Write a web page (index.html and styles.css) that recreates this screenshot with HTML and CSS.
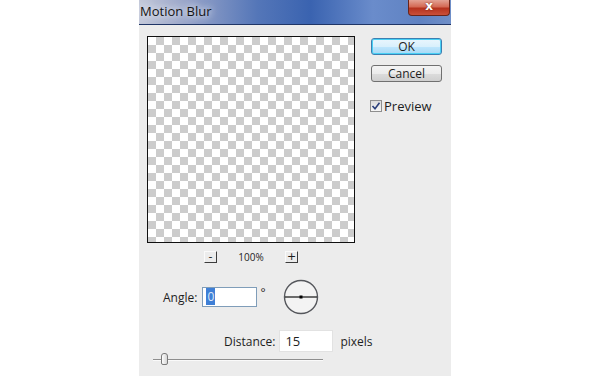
FILE: index.html
```html
<!DOCTYPE html>
<html lang="en">
<head>
    <meta charset="UTF-8">
    <title>Motion Blur</title>
    <link rel="stylesheet" href="styles.css">
</head>
<body>
    <div class="dialog">
        <div class="titlebar">
            <span class="title">Motion Blur</span>
            <span class="close">x</span>
        </div>

        <div class="panel">
            <div class="left">
                <div class="preview"></div>

                <div class="zoom-row">
                    <span class="zoom-btn">-</span>
                    <span class="zoom-value">100%</span>
                    <span class="zoom-btn">+</span>
                </div>

                <div class="angle-row">
                    <span class="label">Angle:</span>
                    <span class="field angle-field"><span class="selected">0</span></span>
                    <span class="degree">°</span>
                    <svg class="dial" width="36" height="36" viewBox="0 0 36 36">
                        <circle cx="18" cy="18" r="16.5" fill="#f3f3f3" stroke="#55575c" stroke-width="1.4"/>
                        <line x1="2" y1="18" x2="34" y2="18" stroke="#111" stroke-width="1.2"/>
                        <rect x="16.5" y="16.5" width="3" height="3" fill="#000"/>
                    </svg>
                </div>

                <div class="distance-row">
                    <span class="label">Distance:</span>
                    <span class="field distance-field">15</span>
                    <span class="unit">pixels</span>
                </div>

                <div class="slider">
                    <div class="track"></div>
                    <div class="thumb"></div>
                </div>
            </div>

            <div class="right">
                <div class="btn btn-default">OK</div>
                <div class="btn">Cancel</div>
                <label class="check">
                    <span class="box">
                        <svg width="10" height="10" viewBox="0 0 10 10">
                            <path d="M1.5 5 L4 7.8 L8.5 1.8" fill="none" stroke="#2b3f7a" stroke-width="1.6"/>
                        </svg>
                    </span>
                    Preview
                </label>
            </div>
        </div>
    </div>
</body>
</html>
```

FILE: styles.css
```css
body {
    margin: 0;
    padding: 0;
    background: #fff;
    font-family: "Open Sans", "Noto Sans", sans-serif;
    color: #1e1e1e;
}

.dialog {
    margin-left: 139px;
    width: 312px;
    height: 376px;
    background: #ececec;
    overflow: hidden;
}

.titlebar {
    height: 24px;
    display: flex;
    justify-content: space-between;
    align-items: flex-start;
    border-bottom: 1px solid #1f3566;
    background: linear-gradient(90deg, #c3c8d9 0%, #99a5c9 15%, #5476b8 38%, #3a63b0 55%, #6a8ccb 75%, #5f82c2 90%, #6f8fc8 100%);
}

.title {
    font-size: 13px;
    line-height: 22px;
    padding-left: 1px;
    color: #141414;
    text-shadow: 0 0 6px #e6e9f2, 0 0 10px #e6e9f2;
}

.close {
    width: 42px;
    height: 16px;
    margin-right: 1px;
    box-sizing: border-box;
    border: 1px solid #6a2419;
    border-top: none;
    border-radius: 0 0 4px 4px;
    background: linear-gradient(#e3a294 0%, #d46a55 45%, #b6321e 55%, #c9503a 100%);
    color: #fff;
    font-family: "DejaVu Sans", sans-serif;
    font-weight: bold;
    font-size: 12px;
    display: flex;
    align-items: center;
    justify-content: center;
    padding-bottom: 3px;
    text-shadow: 0 0 2px #6a2419;
}

.panel {
    display: flex;
    padding: 11px 0 0 8px;
    gap: 16px;
}

.left {
    width: 208px;
    flex-shrink: 0;
    display: flex;
    flex-direction: column;
}

.preview {
    width: 208px;
    height: 207px;
    box-sizing: border-box;
    border: 1px solid #111;
    background: repeating-conic-gradient(#cccccc 0 25%, #fff 0 50%) 0 0 / 16px 16px;
}

.zoom-row {
    display: flex;
    align-items: center;
    margin-top: 8px;
    padding-left: 57px;
    height: 12px;
    font-size: 10px;
}

.zoom-btn {
    width: 13px;
    height: 12px;
    box-sizing: border-box;
    border-right: 1px solid #3c3c3c;
    border-bottom: 1px solid #3c3c3c;
    border-top: 1px solid #fafafa;
    border-left: 1px solid #fafafa;
    font-family: "DejaVu Sans", sans-serif;
    font-size: 11px;
    line-height: 9px;
    text-align: center;
}

.zoom-value {
    margin: 0 21px 0 21px;
    width: 26px;
    text-align: center;
}

.angle-row {
    display: flex;
    align-items: center;
    margin-top: 17px;
    padding-left: 16px;
    height: 34px;
}

.label {
    font-size: 12px;
    flex-shrink: 0;
}

.field {
    height: 20px;
    flex-shrink: 0;
    box-sizing: border-box;
    background: #fff;
    border: 1px solid #aab0bc;
    font-size: 12px;
    line-height: 18px;
    padding-left: 3px;
}

.angle-field {
    width: 55px;
    margin-left: 5px;
    border-color: #7f9db9;
}

.selected {
    background: #3f7fd6;
    color: #dfe9f7;
    padding: 0 1px;
}

.degree {
    font-size: 12px;
    margin: -10px 0 0 3px;
}

.dial {
    flex-shrink: 0;
    margin-left: 17px;
}

.distance-row {
    display: flex;
    align-items: center;
    margin-top: 16px;
    padding-left: 77px;
    height: 22px;
}

.distance-field {
    width: 54px;
    height: 22px;
    line-height: 20px;
    margin-left: 4px;
    border-color: #e2e2e2;
    font-size: 13px;
    padding-left: 5px;
}

.unit {
    font-size: 12px;
    margin-left: 7px;
    flex-shrink: 0;
    white-space: nowrap;
}

.slider {
    position: relative;
    margin: 0 0 0 6px;
    width: 170px;
    height: 16px;
}

.track {
    margin-top: 7px;
    height: 1px;
    background: #8e8e8e;
    border-bottom: 1px solid #fafafa;
}

.thumb {
    position: absolute;
    left: 8px;
    top: 1px;
    width: 7px;
    height: 12px;
    box-sizing: border-box;
    border: 1px solid #7a7a7a;
    border-radius: 3px 3px 2px 2px;
    background: linear-gradient(90deg, #fdfdfd, #d6d6d6);
}

.right {
    display: flex;
    flex-direction: column;
    padding-top: 2px;
}

.btn {
    width: 71px;
    height: 17px;
    box-sizing: border-box;
    border: 1px solid #707070;
    border-radius: 3px;
    background: linear-gradient(#f4f4f4 0%, #ebebeb 50%, #dcdcdc 52%, #cfcfcf 100%);
    font-size: 12px;
    line-height: 15px;
    text-align: center;
    margin-bottom: 10px;
}

.btn-default {
    border-color: #3c7fb1;
    box-shadow: inset 0 0 0 1px #48d0f5;
    background: linear-gradient(#eaf6fd 0%, #d9f0fc 50%, #bee6fd 52%, #a7d9f5 100%);
}

.check {
    display: flex;
    align-items: center;
    margin-top: 5px;
    margin-left: -1px;
    font-size: 13px;
}

.box {
    width: 12px;
    height: 12px;
    box-sizing: border-box;
    border: 1px solid #8f8f8f;
    background: linear-gradient(#dcdcdc, #f6f6f6);
    margin-right: 2px;
    display: flex;
    align-items: center;
    justify-content: center;
}
```
